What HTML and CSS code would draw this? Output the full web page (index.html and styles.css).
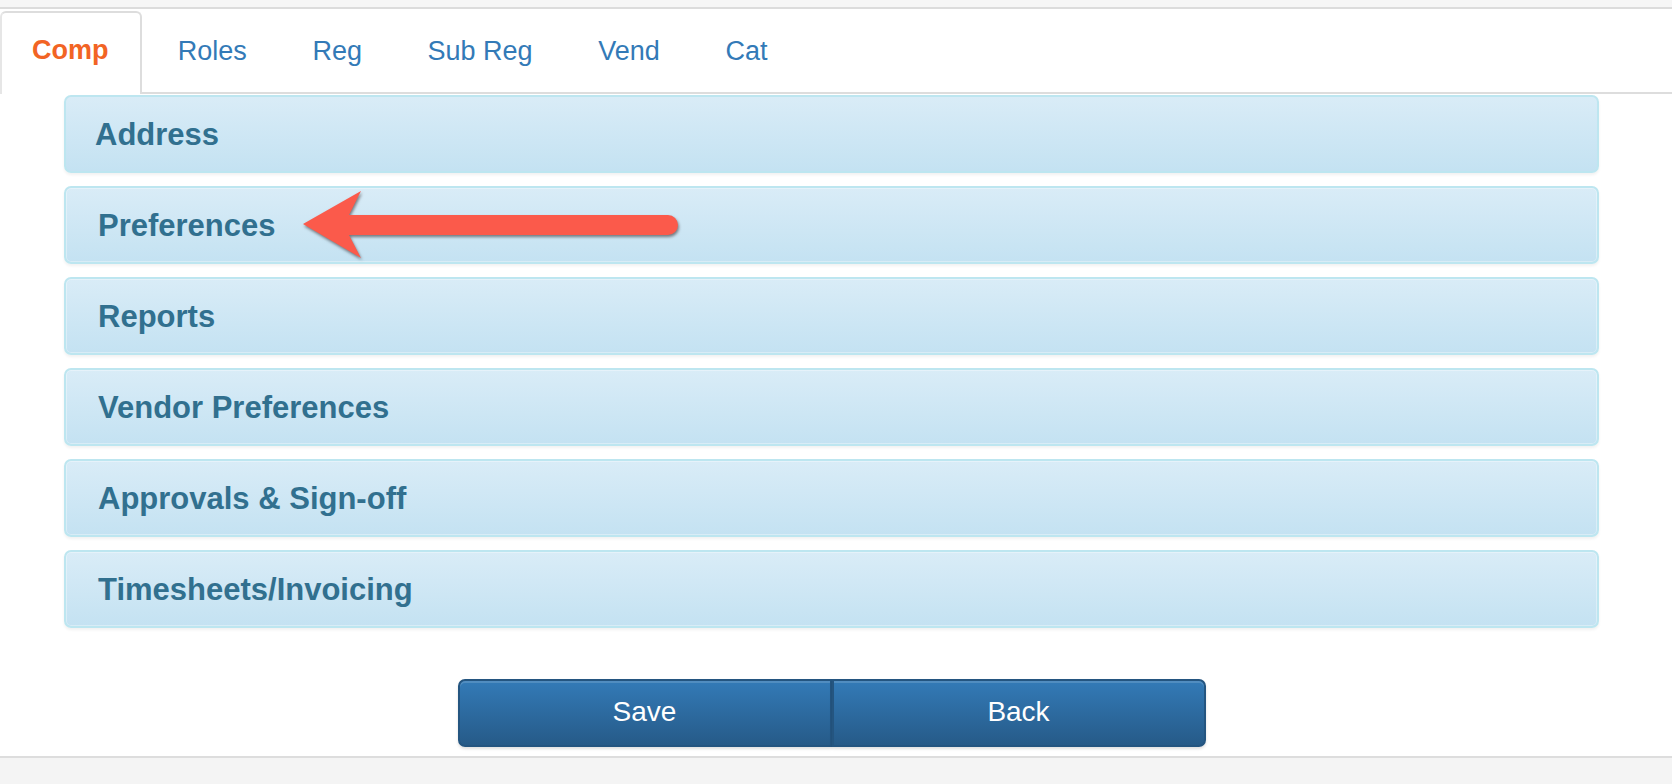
FILE: index.html
```html
<!DOCTYPE html>
<html lang="en">
<head>
<meta charset="utf-8">
<title>Company</title>
<link rel="stylesheet" href="styles.css">
</head>
<body>
<div class="topstrip"></div>
<div class="page">
  <ul class="tabs">
    <li class="tab active"><a href="#">Comp</a></li>
    <li class="tab"><a href="#">Roles</a></li>
    <li class="tab"><a href="#">Reg</a></li>
    <li class="tab"><a href="#">Sub Reg</a></li>
    <li class="tab"><a href="#">Vend</a></li>
    <li class="tab"><a href="#">Cat</a></li>
  </ul>
  <div class="content">
    <div class="panels">
      <div class="panel first"><span class="panel-title">Address</span></div>
      <div class="panel"><span class="panel-title">Preferences</span>
        <svg class="arrow" width="700" height="84" viewBox="0 0 700 84" aria-hidden="true">
          <path d="M239,39 L297,6 L285,30 L604,30 A10,10 0 0 1 604,50 L285,50 L297,73 Z" fill="#fb5a4b"/>
        </svg>
      </div>
      <div class="panel"><span class="panel-title">Reports</span></div>
      <div class="panel"><span class="panel-title">Vendor Preferences</span></div>
      <div class="panel"><span class="panel-title">Approvals &amp; Sign-off</span></div>
      <div class="panel"><span class="panel-title">Timesheets/Invoicing</span></div>
    </div>
    <div class="actions">
      <button class="btn left" type="button">Save</button>
      <button class="btn right" type="button">Back</button>
    </div>
  </div>
</div>
<div class="footer"></div>
</body>
</html>
```
FILE: styles.css
```css
html, body {
  margin: 0;
  padding: 0;
  background: #ffffff;
  font-family: "Liberation Sans", Arial, sans-serif;
}

body {
  height: 784px;
  overflow: hidden;
  display: flex;
  flex-direction: column;
}

.topstrip {
  height: 7px;
  background: #f6f6f6;
  border-bottom: 2px solid #dcdcdc;
  flex: none;
}

.page {
  padding-top: 2px;
  flex: none;
}

.tabs {
  list-style: none;
  margin: 0;
  padding: 0;
  display: flex;
  border-bottom: 2px solid #dddddd;
  height: 81px;
}

.tab {
  margin-right: 3px;
  margin-bottom: -2px;
  display: flex;
}

.tab a {
  display: flex;
  align-items: center;
  padding: 0 29.3px 5px 29.3px;
  font-size: 27px;
  color: #337ab7;
  text-decoration: none;
  border: 2px solid transparent;
  border-bottom: none;
  border-radius: 6px 6px 0 0;
}

.tab.active {
  margin-right: 5px;
}

.tab.active a {
  color: #f26424;
  font-weight: bold;
  background: #ffffff;
  border-color: #dddddd;
  border-left-color: #e6e6e6;
  padding: 0 31px 7px 30px;
  height: 83px;
  box-sizing: border-box;
}

.content {
  padding: 0 73px 0 64px;
}

.panels {
  padding-top: 1px;
  display: flex;
  flex-direction: column;
  gap: 13px;
}

.panel {
  position: relative;
  height: 78px;
  box-sizing: border-box;
  display: flex;
  align-items: center;
  padding-left: 32px;
  border: 2px solid #bde6f0;
  border-radius: 7px;
  background: linear-gradient(to bottom, #d9ecf7 0%, #c4e2f2 100%);
  box-shadow: inset 0 0 0 1px rgba(255, 255, 255, 0.35), 0 2px 3px rgba(0, 0, 0, 0.06);
}

.panel.first {
  padding-left: 29px;
  box-shadow: 0 2px 3px rgba(0, 0, 0, 0.06);
}

.panel-title {
  font-size: 31px;
  font-weight: bold;
  color: #31708f;
  padding-top: 2px;
}

.arrow {
  position: absolute;
  left: -2px;
  top: -3px;
  filter: drop-shadow(1px 2px 1.5px rgba(40, 30, 30, 0.55));
}

.actions {
  display: flex;
  justify-content: center;
  margin-top: 51px;
}

.btn {
  width: 374px;
  height: 68px;
  margin: 0;
  font-family: "Liberation Sans", Arial, sans-serif;
  font-size: 28px;
  color: #ffffff;
  background: linear-gradient(to bottom, #337ab7 0%, #265a88 100%);
  border: 2px solid #245580;
  box-shadow: inset 0 2px 0 rgba(255, 255, 255, 0.15), 0 2px 3px rgba(0, 0, 0, 0.12);
  cursor: pointer;
  padding: 0 0 2px 0;
}

.btn.left {
  border-radius: 7px 0 0 7px;
  border-right-width: 2px;
}

.btn.right {
  border-radius: 0 7px 7px 0;
  border-left-width: 2px;
}

.footer {
  margin-top: 9px;
  flex: 1;
  background: #f4f4f4;
  border-top: 2px solid #dddddd;
}
```
